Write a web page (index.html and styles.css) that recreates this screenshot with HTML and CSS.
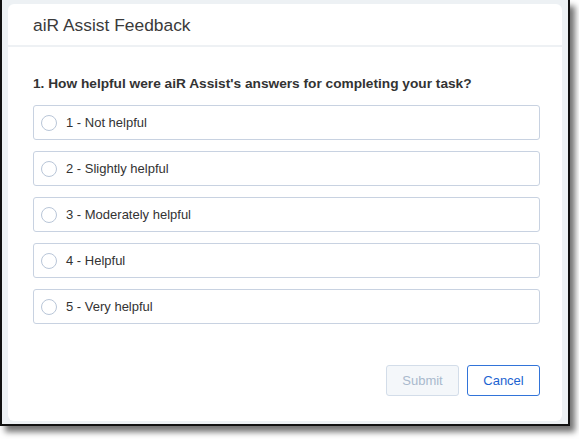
FILE: index.html
```html
<!DOCTYPE html>
<html>
<head>
<meta charset="utf-8">
<link rel="stylesheet" href="styles.css">
</head>
<body>
<div class="frame">
  <div class="dialog">
    <div class="header"><h1 class="title">aiR Assist Feedback</h1></div>
    <div class="content">
      <p class="question">1. How helpful were aiR Assist's answers for completing your task?</p>
      <div class="options">
        <label class="option"><span class="radio"></span><span class="label">1 - Not helpful</span></label>
        <label class="option"><span class="radio"></span><span class="label">2 - Slightly helpful</span></label>
        <label class="option"><span class="radio"></span><span class="label">3 - Moderately helpful</span></label>
        <label class="option"><span class="radio"></span><span class="label">4 - Helpful</span></label>
        <label class="option"><span class="radio"></span><span class="label">5 - Very helpful</span></label>
      </div>
    </div>
    <div class="footer">
      <button class="btn btn-disabled" disabled>Submit</button>
      <button class="btn btn-outline">Cancel</button>
    </div>
  </div>
</div>
</body>
</html>
```

FILE: styles.css
```css
* { box-sizing: border-box; }
html, body { margin: 0; padding: 0; background: #ffffff; }
html { min-height: 439px; }
body { font-family: "Liberation Sans", Arial, sans-serif; color: #333; min-height: 439px; }

.frame {
  width: 570px;
  height: 426px;
  border-left: 2px solid #111;
  border-right: 2px solid #111;
  border-bottom: 2px solid #111;
  background: #edf1f4;
  padding: 4px 6px 3px 6px;
  box-shadow: 5px 6px 6px rgba(0,0,0,0.55);
}

.dialog {
  height: 100%;
  background: #fff;
  border-radius: 6px;
  display: flex;
  flex-direction: column;
}

.header {
  height: 43px;
  border-bottom: 2px solid #eef1f4;
  padding-left: 25px;
  padding-top: 2px;
  display: flex;
  align-items: center;
}
.title {
  margin: 0;
  font-size: 17.4px;
  font-weight: normal;
  color: #3a3a3a;
}

.content {
  padding: 29px 22px 0 25px;
}
.question {
  margin: 0 0 14px 0;
  font-size: 13.7px;
  font-weight: bold;
  color: #333;
}
.options {
  display: flex;
  flex-direction: column;
  gap: 11px;
}
.option {
  height: 35px;
  border: 1px solid #c8d2e1;
  border-radius: 3px;
  display: flex;
  align-items: center;
  padding-left: 7px;
  gap: 9px;
}
.radio {
  width: 16px;
  height: 16px;
  border: 1px solid #b9c6d8;
  border-radius: 50%;
  background: #fff;
}
.label {
  font-size: 13px;
  color: #333;
}

.footer {
  margin-top: auto;
  padding: 0 22px 25px 0;
  display: flex;
  justify-content: flex-end;
  gap: 8px;
}
.btn {
  width: 73px;
  height: 31px;
  border-radius: 3px;
  font-family: "Liberation Sans", Arial, sans-serif;
  font-size: 13px;
  background: #fff;
}
.btn-disabled {
  background: #f4f7fa;
  border: 1px solid #d3dde9;
  color: #a9b9cd;
}
.btn-outline {
  border: 1px solid #3274d9;
  color: #1c63d1;
}
```
